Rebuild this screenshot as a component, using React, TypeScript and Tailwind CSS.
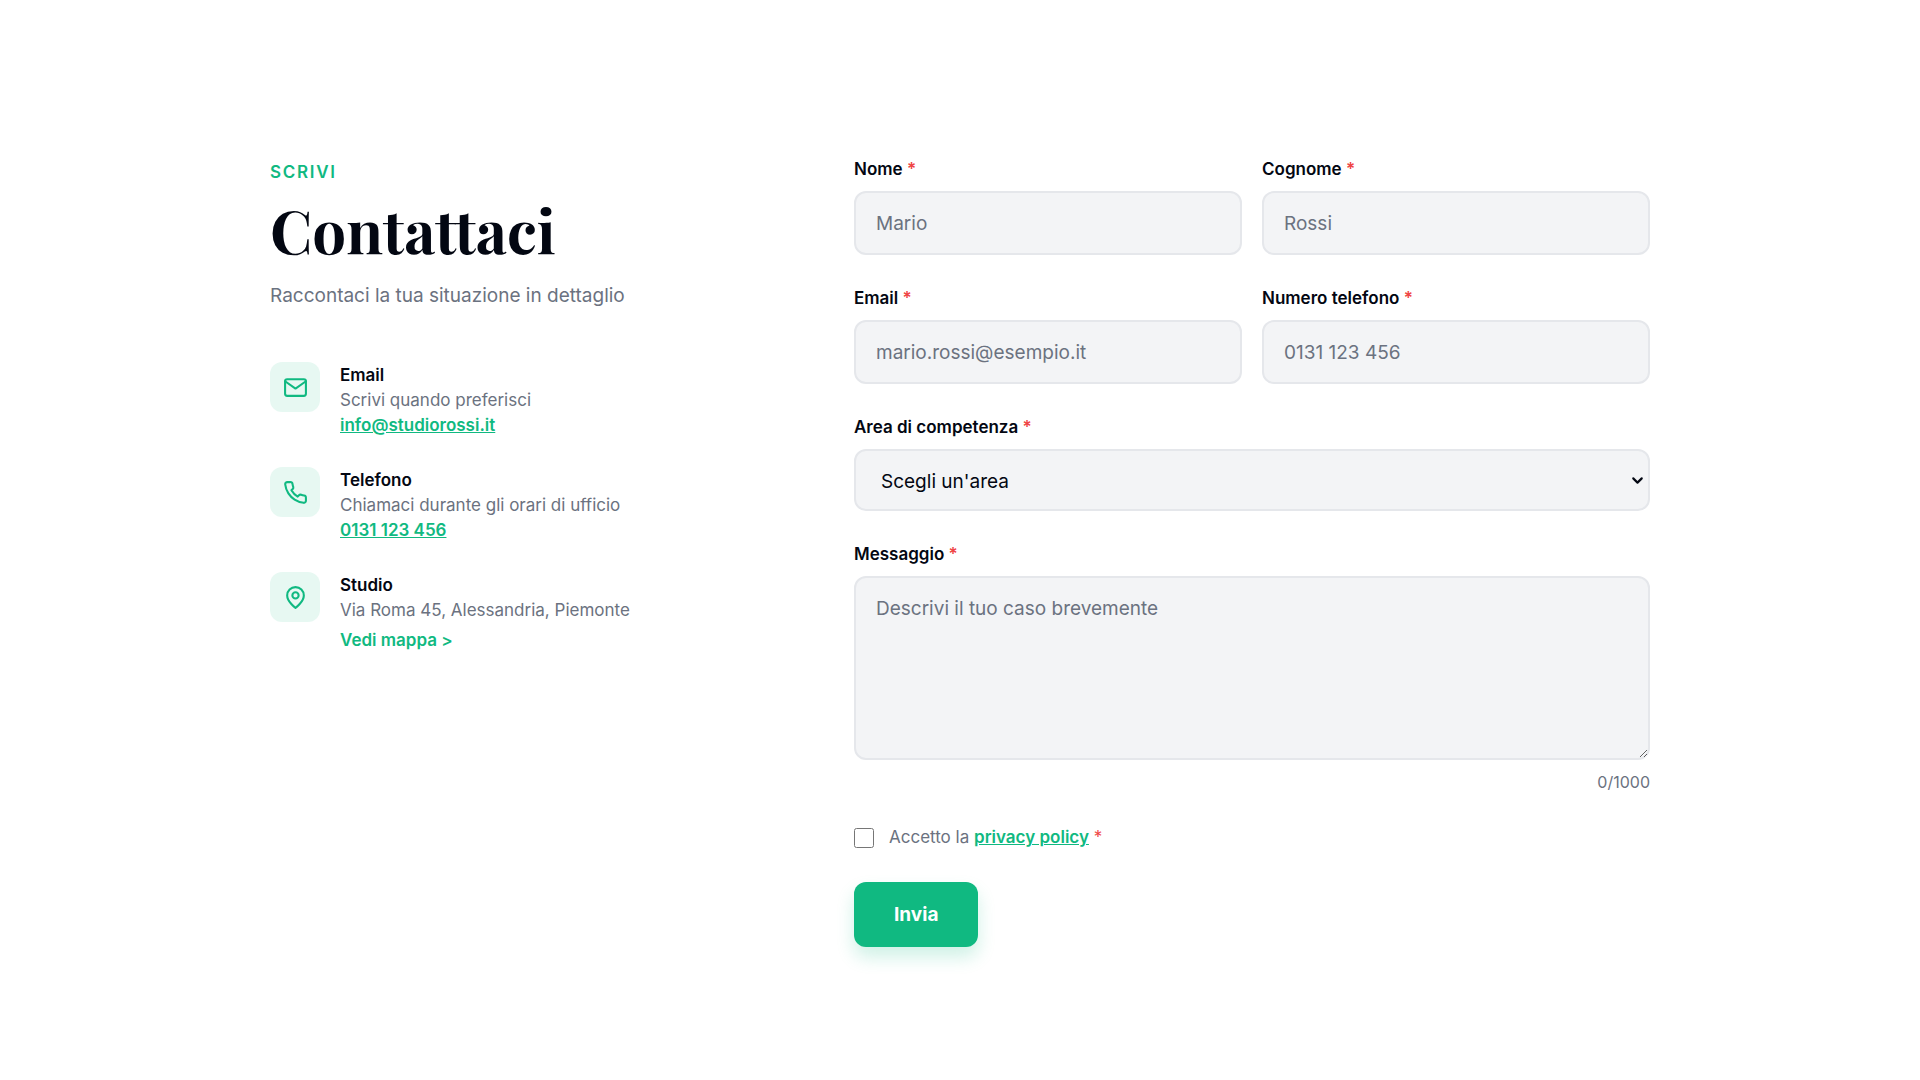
import { useState } from "react";
import type { FormEvent, ReactNode } from "react";
import { ChevronDown } from "lucide-react";
import { FiMail, FiPhone } from "react-icons/fi";

const MAX_LENGTH = 1000;

const areas = ["Diritto civile", "Diritto penale", "Diritto di famiglia", "Diritto del lavoro"];

const fieldClass =
  "block w-full rounded-xl border-2 border-[#e5e7eb] bg-[#f3f4f6] pt-[17px] pb-[15px] text-[19px] leading-[28px] text-[#030712] placeholder:text-[#6b7280] focus:border-[#10b981] focus:outline-none";

const linkClass = "font-semibold text-[#10b981]";

function PinIcon() {
  return (
    <svg
      viewBox="0 0 24 24"
      fill="none"
      stroke="currentColor"
      strokeWidth="2"
      strokeLinecap="round"
      strokeLinejoin="round"
      aria-hidden="true"
      className="size-[25px]"
    >
      <path d="M20 10c0 6-8 12-8 12s-8-6-8-12a8 8 0 0 1 16 0Z" />
      <circle cx="12" cy="10" r="3" />
    </svg>
  );
}

function Required() {
  return <span className="text-[#ef4444]">*</span>;
}

interface FieldProps {
  id: string;
  label: string;
  children: ReactNode;
}

function Field({ id, label, children }: FieldProps) {
  return (
    <div>
      <label htmlFor={id} className="mb-[9px] block text-[17px] leading-[25px] font-semibold text-[#030712]">
        {label} <Required />
      </label>
      {children}
    </div>
  );
}

interface TextFieldProps {
  id: string;
  label: string;
  placeholder: string;
  type?: string;
}

function TextField({ id, label, placeholder, type = "text" }: TextFieldProps) {
  return (
    <Field id={id} label={label}>
      <input id={id} name={id} type={type} placeholder={placeholder} required className={`${fieldClass} px-5`} />
    </Field>
  );
}

interface ContactItemProps {
  icon: ReactNode;
  title: string;
  text: string;
  children: ReactNode;
}

function ContactItem({ icon, title, text, children }: ContactItemProps) {
  return (
    <li className="flex items-start gap-5">
      <div className="flex size-[50px] shrink-0 items-center justify-center rounded-xl bg-[#10b981]/10 text-[#10b981]">
        {icon}
      </div>
      <div className="pt-[1px] text-[17px] leading-[25px]">
        <h2 className="font-semibold text-[#030712]">{title}</h2>
        <p className="text-[#6b7280]">{text}</p>
        {children}
      </div>
    </li>
  );
}

export default function App() {
  const [message, setMessage] = useState("");

  const handleSubmit = (e: FormEvent) => {
    e.preventDefault();
  };

  return (
    <main className="min-h-screen bg-white px-8 py-[157px] font-['Inter','Liberation_Sans',sans-serif]">
      <div className="mx-auto grid max-w-[1380px] grid-cols-1 gap-20 lg:grid-cols-5">
        {/* Contacts */}
        <section className="lg:col-span-2">
          <p className="mt-[3px] text-[17px] leading-[25px] font-semibold tracking-widest text-[#10b981] uppercase">Scrivi</p>
          <h1 className="mt-3 font-['Playfair_Display','Liberation_Serif',serif] text-[60px] leading-[64px] font-bold text-[#030712]">
            Contattaci
          </h1>
          <p className="mt-5 text-[19px] leading-[30px] text-[#6b7280]">Raccontaci la tua situazione in dettaglio</p>

          <ul className="mt-[51px] space-y-[29px]">
            <ContactItem icon={<FiMail className="size-[25px]" />} title="Email" text="Scrivi quando preferisci">
              <a href="mailto:info@studiorossi.it" className={`${linkClass} block underline`}>
                info@studiorossi.it
              </a>
            </ContactItem>
            <ContactItem icon={<FiPhone className="size-[25px]" />} title="Telefono" text="Chiamaci durante gli orari di ufficio">
              <a href="tel:0131123456" className={`${linkClass} block underline`}>
                0131 123 456
              </a>
            </ContactItem>
            <ContactItem icon={<PinIcon />} title="Studio" text="Via Roma 45, Alessandria, Piemonte">
              <a href="#mappa" className={`${linkClass} mt-[5px] block`}>
                Vedi mappa &gt;
              </a>
            </ContactItem>
          </ul>
        </section>

        {/* Form */}
        <form onSubmit={handleSubmit} className="lg:col-span-3">
          <div className="space-y-[31px]">
            <div className="grid grid-cols-1 gap-x-5 gap-y-[31px] sm:grid-cols-2">
              <TextField id="nome" label="Nome" placeholder="Mario" />
              <TextField id="cognome" label="Cognome" placeholder="Rossi" />
              <TextField id="email" label="Email" type="email" placeholder="mario.rossi@esempio.it" />
              <TextField id="telefono" label="Numero telefono" type="tel" placeholder="0131 123 456" />
            </div>

            <Field id="area" label="Area di competenza">
              <div className="relative">
                <select id="area" name="area" defaultValue="" required className={`${fieldClass} h-[62px] appearance-none px-[25px]`}>
                  <option value="">Scegli un'area</option>
                  {areas.map((area) => (
                    <option key={area} value={area}>
                      {area}
                    </option>
                  ))}
                </select>
                <ChevronDown
                  strokeWidth={3}
                  className="pointer-events-none absolute inset-y-0 right-1 my-auto size-[17px] text-[#030712]"
                />
              </div>
            </Field>

            <div>
              <Field id="messaggio" label="Messaggio">
                <textarea
                  id="messaggio"
                  name="messaggio"
                  maxLength={MAX_LENGTH}
                  value={message}
                  onChange={(e) => setMessage(e.target.value)}
                  placeholder="Descrivi il tuo caso brevemente"
                  required
                  className={`${fieldClass} h-[184px] resize-y px-5`}
                />
              </Field>
              <p className="mt-3 text-right text-[16px] leading-[20px] text-[#6b7280]">
                {message.length}/{MAX_LENGTH}
              </p>
            </div>
          </div>

          <div className="mt-[33px] flex items-center gap-[15px]">
            <input id="privacy" name="privacy" type="checkbox" required className="size-5 accent-[#10b981]" />
            <label htmlFor="privacy" className="text-[17px] leading-[25px] text-[#6b7280]">
              Accetto la{" "}
              <a href="#privacy-policy" className={`${linkClass} underline`}>
                privacy policy
              </a>{" "}
              <Required />
            </label>
          </div>

          <button
            type="submit"
            className="mt-8 rounded-xl bg-[#10b981] px-10 py-[18px] text-[19px] leading-[29px] font-bold text-white shadow-[0_10px_18px_rgba(16,185,129,0.2)] hover:bg-[#059669]"
          >
            Invia
          </button>
        </form>
      </div>
    </main>
  );
}
